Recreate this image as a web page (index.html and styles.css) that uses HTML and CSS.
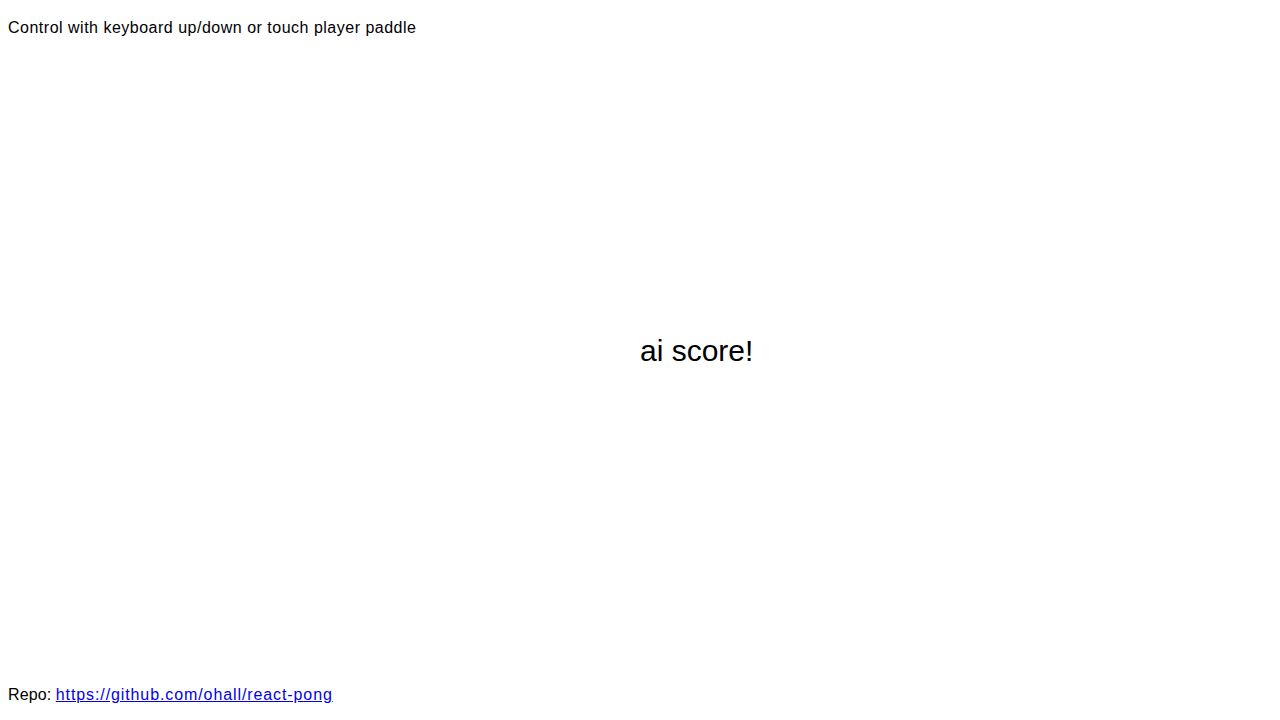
FILE: index.html
```html
<!DOCTYPE html>
<html lang="en">
<head>
    <meta charset="UTF-8">
    <meta name="viewport" content="width=device-width, initial-scale=1.0">
    <title>React Pong</title>
    <link rel="stylesheet" href="styles.css">
</head>
<body>
    <p class="help">Control with keyboard up/down or touch player paddle</p>

    <div class="court">
        <div class="message">ai score!</div>
    </div>

    <p class="repo">Repo: <a href="https://github.com/ohall/react-pong">https://github.com/ohall/react-pong</a></p>
</body>
</html>
```

FILE: styles.css
```css
html, body {
    height: 100%;
}

body {
    margin: 0;
    padding: 0 8px;
    box-sizing: border-box;
    display: flex;
    flex-direction: column;
    font-family: "Liberation Sans", Arial, sans-serif;
    font-size: 16px;
    color: #000;
    background-color: #fff;
}

.help {
    margin: 19px 0 0;
    line-height: 18px;
    letter-spacing: 0.5px;
}

.court {
    flex: 1;
    display: flex;
    align-items: center;
    padding-left: 50%;
}

.message {
    font-size: 30px;
    line-height: 34px;
    margin-top: -22px;
}

.repo {
    margin: 0 0 16px;
    line-height: 18px;
    letter-spacing: 0.1px;
}

.repo a {
    color: #0000ee;
    letter-spacing: 0.9px;
}
```
